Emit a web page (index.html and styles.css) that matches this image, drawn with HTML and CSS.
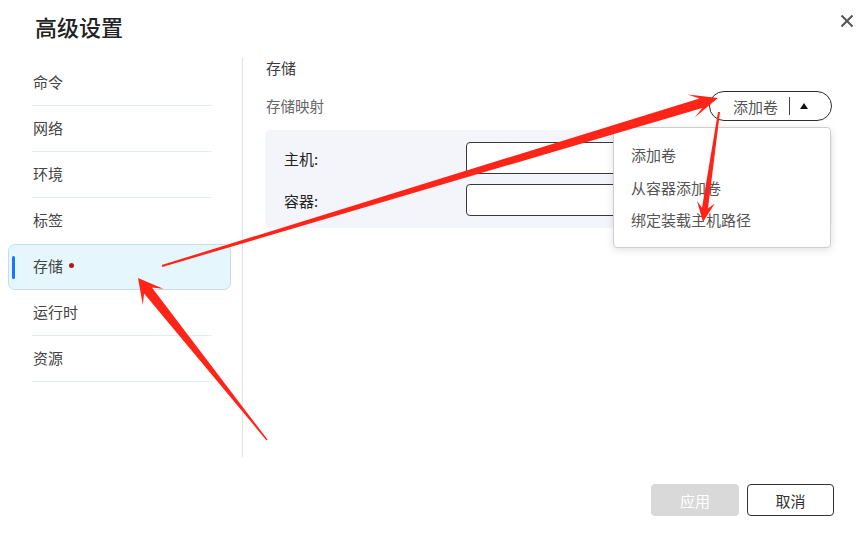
FILE: index.html
```html
<!DOCTYPE html>
<html lang="zh-CN">
<head>
<meta charset="utf-8">
<title>高级设置</title>
<link rel="stylesheet" href="styles.css">
</head>
<body>
<div class="dialog">
  <header class="header">
    <h1 class="title">高级设置</h1>
    <button class="close" aria-label="关闭">
      <svg width="14" height="14" viewBox="0 0 14 14"><path d="M1.5 1.5L12.5 12.5M12.5 1.5L1.5 12.5" stroke="#555" stroke-width="2" fill="none"/></svg>
    </button>
  </header>
  <div class="body">
    <nav class="nav">
      <div class="item"><div class="row">命令</div></div>
      <div class="item"><div class="row">网络</div></div>
      <div class="item"><div class="row">环境</div></div>
      <div class="item"><div class="row nosep">标签</div></div>
      <div class="item active"><span class="bar"></span><div class="row">存储<span class="dot"></span></div></div>
      <div class="item"><div class="row">运行时</div></div>
      <div class="item"><div class="row">资源</div></div>
    </nav>
    <main class="content">
      <div class="section-title">存储</div>
      <div class="map-row">
        <div class="map-label">存储映射</div>
        <div class="add-wrap">
          <button class="add-btn"><span>添加卷</span><span class="vsep"></span><span class="tri"></span></button>
          <div class="menu">
            <div class="menu-item">添加卷</div>
            <div class="menu-item">从容器添加卷</div>
            <div class="menu-item">绑定装载主机路径</div>
          </div>
        </div>
      </div>
      <div class="panel">
        <div class="field"><label class="flabel">主机:</label><div class="input"></div></div>
        <div class="field"><label class="flabel">容器:</label><div class="input"></div></div>
      </div>
    </main>
  </div>
  <footer class="footer">
    <button class="btn apply">应用</button>
    <button class="btn cancel">取消</button>
  </footer>
  <svg class="arrows" width="866" height="535" viewBox="0 0 866 535">
    <polygon fill="#ff2418" points="162.3,267.0 702.3,108.0 694.7,117.6 718,98 687.7,94.6 699.4,98.4 161.7,265.0"/>
    <polygon fill="#ff2418" points="267.5,439.6 151.9,287.4 163.2,288.7 138,278 142.8,304.9 144.1,293.6 266.5,440.4"/>
    <polygon fill="#ff2418" points="718.0,111.9 702.0,207.8 697.0,200.9 703,222 714.8,203.5 708.0,208.6 720.0,112.1"/>
  </svg>
</div>
</body>
</html>
```
FILE: styles.css
```css
* { box-sizing: border-box; }
html, body { margin: 0; padding: 0; background: #fff; }
body {
  font-family: "Noto Sans CJK SC", "Noto Sans", sans-serif;
  font-size: 15px;
  color: #333;
}
.dialog {
  position: relative;
  width: 866px;
  height: 535px;
  display: flex;
  flex-direction: column;
  overflow: hidden;
}
.header {
  height: 58px;
  display: flex;
  justify-content: space-between;
  align-items: flex-start;
  padding: 11px 12px 0 35px;
}
.title {
  margin: 0;
  font-size: 22px;
  line-height: 30px;
  font-weight: 500;
  color: #222;
}
.close {
  border: 0;
  background: none;
  padding: 0;
  width: 14px;
  height: 14px;
  margin-top: 3px;
  display: flex;
}
.body {
  height: 399px;
  display: flex;
}
.nav {
  width: 243px;
  padding: 2px 11px 0 8px;
  border-right: 1px solid #d9e3ea;
  display: flex;
  flex-direction: column;
}
.item {
  height: 46px;
  padding-left: 24px;
  display: flex;
  align-items: stretch;
  border-radius: 7px;
}
.item .row {
  width: 180px;
  display: flex;
  align-items: center;
  border-bottom: 1px solid #e2ecf2;
  padding: 0 0 3px 1px;
  color: #444;
}
.item .row.nosep { border-bottom-color: transparent; }
.item.active {
  background: #e6f6fd;
  border: 1px solid #c9dce6;
  padding-left: 3px;
  align-items: center;
}
.item.active .row {
  border-bottom: 0;
  height: 100%;
  padding: 0 0 3px 18px;
}
.bar {
  width: 3px;
  height: 23px;
  border-radius: 2px;
  background: #1677ff;
}
.dot {
  width: 5px;
  height: 5px;
  border-radius: 50%;
  background: #c4101b;
  margin-left: 6px;
}
.content {
  flex: 1;
  padding: 0 34px 0 23px;
  display: flex;
  flex-direction: column;
}
.section-title {
  line-height: 20px;
  height: 20px;
  color: #3a3a3a;
}
.map-row {
  margin-top: 13px;
  height: 30px;
  display: flex;
  justify-content: space-between;
  align-items: center;
}
.map-label {
  color: #666;
  font-size: 14.5px;
  margin-top: -2px;
}
.add-wrap { position: relative; }
.add-btn {
  width: 123px;
  height: 30px;
  border: 1px solid #2d2d2d;
  border-radius: 15px;
  background: #fff;
  display: flex;
  align-items: center;
  padding: 0 0 0 23px;
  font-family: inherit;
  font-size: 15px;
  color: #555;
}
.vsep {
  width: 1px;
  height: 18px;
  background: #444;
  margin-left: 11px;
}
.tri {
  margin-left: 10px;
  width: 0;
  height: 0;
  border-left: 4.5px solid transparent;
  border-right: 4.5px solid transparent;
  border-bottom: 6px solid #111;
}
.menu {
  position: absolute;
  top: 36px;
  right: 1px;
  width: 218px;
  height: 121px;
  background: #fff;
  border: 1px solid #cfcfcf;
  border-radius: 4px;
  box-shadow: 0 2px 8px rgba(0,0,0,0.12);
  padding: 11px 0 0 0;
  z-index: 5;
}
.menu-item {
  height: 32.5px;
  line-height: 32.5px;
  padding-left: 17px;
  color: #555;
  font-size: 15px;
}
.panel {
  margin-top: 9px;
  margin-left: -1px;
  background: #f4f5fa;
  border-radius: 6px;
  padding: 12px 18px 12px 19px;
  display: flex;
  flex-direction: column;
  gap: 10px;
}
.field {
  display: flex;
  align-items: center;
  height: 32px;
}
.flabel {
  width: 182px;
  color: #222;
  font-size: 15px;
}
.input {
  flex: 1;
  height: 32px;
  background: #fff;
  border: 1px solid #3a3a3a;
  border-radius: 4px;
}
.footer {
  flex: 1;
  display: flex;
  justify-content: flex-end;
  align-items: flex-start;
  gap: 8px;
  padding: 27px 32px 0 0;
}
.btn {
  height: 32px;
  border-radius: 4px;
  font-family: inherit;
  font-size: 15px;
}
.apply {
  width: 88px;
  background: #d9d9d9;
  border: 1px solid #d9d9d9;
  color: #fff;
}
.cancel {
  width: 87px;
  background: #fff;
  border: 1px solid #333;
  color: #333;
}
.arrows {
  position: absolute;
  left: 0;
  top: 0;
  pointer-events: none;
  z-index: 10;
}
```
